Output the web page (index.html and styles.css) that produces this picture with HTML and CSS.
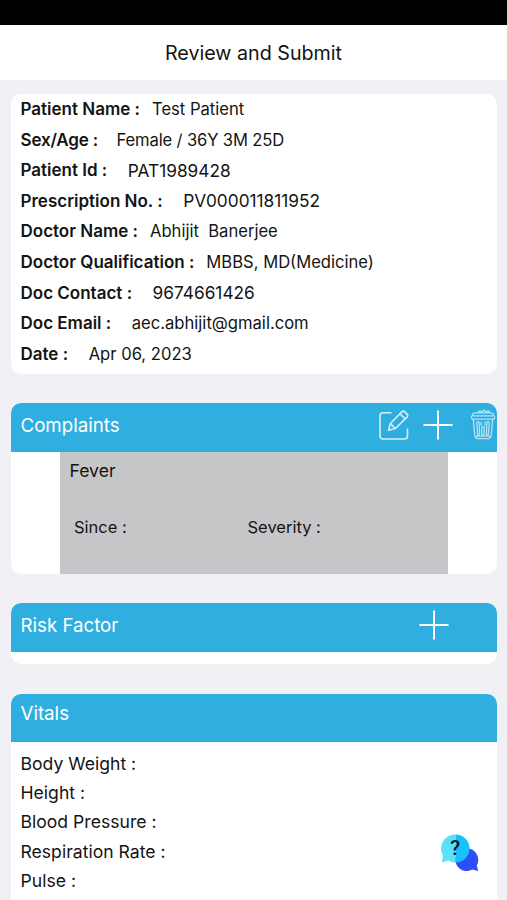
FILE: index.html
```html
<!DOCTYPE html>
<html lang="en">
<head>
    <meta charset="UTF-8">
    <meta name="viewport" content="width=device-width, initial-scale=1.0">
    <title>Review and Submit</title>
    <link rel="stylesheet" href="styles.css">
</head>
<body>
    <div class="status-bar"></div>
    <header class="page-header">
        <h1>Review and Submit</h1>
    </header>
    <main class="content">
        <section class="card details">
            <div class="detail"><b>Patient Name :</b><span>Test Patient</span></div>
            <div class="detail sex-age"><b>Sex/Age :</b><span>Female / 36Y 3M 25D</span></div>
            <div class="detail wide"><b>Patient Id :</b><span class="number">PAT1989428</span></div>
            <div class="detail wide"><b>Prescription No. :</b><span class="number">PV000011811952</span></div>
            <div class="detail"><b>Doctor Name :</b><span>Abhijit&nbsp; Banerjee</span></div>
            <div class="detail"><b>Doctor Qualification :</b><span>MBBS, MD(Medicine)</span></div>
            <div class="detail wide"><b>Doc Contact :</b><span class="number">9674661426</span></div>
            <div class="detail wide"><b>Doc Email :</b><span>aec.abhijit@gmail.com</span></div>
            <div class="detail wide"><b>Date :</b><span>Apr 06, 2023</span></div>
        </section>

        <section class="card complaints">
            <div class="card-head">
                <h2>Complaints</h2>
                <div class="actions">
                    <svg class="icon-edit" viewBox="0 0 30 30">
                        <path d="M12.5 2.8H4Q1 2.8 1 5.8V26Q1 29 4 29H25.5Q28.5 29 28.5 26V18.5"/>
                        <path d="M9.5 20.3L11.4 13.5L22.8 1.9Q24.3 .4 25.8 1.9L28 4.1Q29.5 5.6 28 7.1L16.4 18.5ZM11.4 13.5L16.4 18.5M21 3.8L26.1 8.9"/>
                    </svg>
                    <svg class="icon-plus" viewBox="0 0 30 30"><path d="M15 .5V29.5M.5 15H29.5"/></svg>
                    <svg class="icon-trash" viewBox="0 0 26 32">
                        <path d="M2 6.5Q2.5 4 5 4H21Q23.5 4 24 6.5L25 8.5Q25 10.5 23 10.5H3Q1 10.5 1 8.5ZM2.5 7H23.5M7 4L10 2L12 3L14 1L16 3L19 2L20 4M3 10.5L4.5 27Q4.8 30.5 8 30.5H18Q21.2 30.5 21.5 27L23 10.5"/>
                        <path d="M6.5 14Q8.5 12 9 14L9.5 26Q8.2 28 7.5 26ZM11.7 19Q13 17 14.3 19V26Q13 28 11.7 26ZM17 14Q17.5 12 19.5 14L18.5 26Q17.8 28 16.5 26ZM11 13V17M15 13V17M5.5 28H20.5"/>
                    </svg>
                </div>
            </div>
            <div class="complaint">
                <p class="complaint-name">Fever</p>
                <div class="complaint-info">
                    <p>Since :</p>
                    <p>Severity :</p>
                </div>
            </div>
        </section>

        <section class="card risk">
            <div class="card-head">
                <h2>Risk Factor</h2>
                <div class="actions">
                    <svg class="icon-plus" viewBox="0 0 30 30"><path d="M15 .5V29.5M.5 15H29.5"/></svg>
                </div>
            </div>
        </section>

        <section class="card vitals">
            <div class="card-head">
                <h2>Vitals</h2>
            </div>
            <div class="vitals-list">
                <p>Body Weight :</p>
                <p>Height :</p>
                <p>Blood Pressure :</p>
                <p>Respiration Rate :</p>
                <p>Pulse :</p>
            </div>
        </section>
    </main>

    <div class="chat-button">
        <svg viewBox="0 0 38 38">
            <path fill="#2b50fa" d="M25.5 14.5A11.3 11.3 0 1 0 31.3 35.6L37.2 37L35.8 31.3A11.3 11.3 0 0 0 25.5 14.5Z"/>
            <path fill="#5ce1fa" d="M14.5 .5A14 14 0 0 0 2 21.5L.8 28.5L7.5 26.5A14 14 0 0 0 14.5 28.5Z"/>
            <path fill="#18c1fb" d="M14.5 .5A14 14 0 0 1 14.5 28.5Z"/>
        </svg>
        <span>?</span>
    </div>
</body>
</html>
```
FILE: styles.css
```css
*{
    padding: 0;
    margin: 0;
    box-sizing: border-box;
}
body{
    display: flex;
    flex-direction: column;
    height: 100vh;
    background: #f0f0f5;
    color: #141414;
    font-family: Inter, Roboto, sans-serif;
    font-size: 17.6px;
}
.status-bar{
    height: 25px;
    background: black;
}
.page-header{
    display: flex;
    align-items: center;
    justify-content: center;
    height: 54.5px;
    padding-top: 2px;
    background: white;
}
.page-header h1{
    font-size: 19.7px;
    font-weight: 400;
}
.content{
    display: flex;
    flex: 1;
    flex-direction: column;
    min-height: 0;
    padding: 14px 10px 0 10.5px;
    gap: 29.5px;
}
.card{
    flex-shrink: 0;
    border-radius: 10px;
    overflow: hidden;
    background: white;
}
.details{
    height: 280px;
    padding: 0.5px 0 0 10px;
}
.detail{
    display: flex;
    align-items: center;
    gap: 12px;
    height: 30.55px;
    font-size: 17px;
    white-space: nowrap;
}
.detail.wide{
    gap: 20.5px;
}
.detail.sex-age{
    gap: 18.5px;
    letter-spacing: -0.15px;
}
.detail b{
    font-weight: 600;
}
.detail span{
    font-size: 16.6px;
}
.detail .number{
    font-size: 17.3px;
}
.card-head{
    display: flex;
    justify-content: space-between;
    height: 48.5px;
    padding-left: 10px;
    background: #2faee0;
    color: white;
}
.card-head h2{
    font-size: 18.7px;
    font-weight: 400;
    line-height: 45px;
}
.actions{
    display: flex;
    align-items: flex-start;
    padding-top: 7px;
}
.actions svg{
    fill: none;
    stroke: white;
    stroke-linejoin: round;
}
.icon-edit{
    width: 30px;
    height: 30px;
    margin-right: 14px;
    stroke-width: 1.6;
    opacity: 0.8;
}
.icon-plus{
    width: 30px;
    height: 30px;
    stroke-width: 2;
}
.icon-trash{
    width: 26px;
    height: 31px;
    margin: -1px 1.5px 0 16.5px;
    stroke-width: 1.3;
    opacity: 0.65;
}
.complaints{
    height: 170.5px;
}
.complaint{
    height: 122px;
    margin: 0 49px;
    padding: 7px 10px;
    background: #c6c6c8;
    line-height: 24px;
}
.complaint-info{
    display: grid;
    grid-template-columns: 173.5px 1fr;
    padding: 32px 0 0 4.5px;
    font-size: 16.5px;
}
.risk{
    height: 61px;
}
.risk .icon-plus{
    margin-right: 48.5px;
}
/* runs on to the bottom of the screen */
.vitals{
    flex: 1;
    min-height: 0;
    border-radius: 10px 10px 0 0;
}
.vitals .card-head h2{
    line-height: 39px;
}
.vitals-list{
    padding: 6.5px 10px 0;
    line-height: 29.4px;
}
.chat-button{
    position: absolute;
    left: 440.5px;
    top: 833.5px;
    width: 38px;
    height: 38px;
}
.chat-button svg{
    display: block;
}
.chat-button span{
    position: absolute;
    left: 0;
    top: 2px;
    width: 29px;
    color: #0b1b2b;
    font-family: Roboto, sans-serif;
    font-size: 21px;
    font-weight: 500;
    line-height: 25px;
    text-align: center;
}
```
